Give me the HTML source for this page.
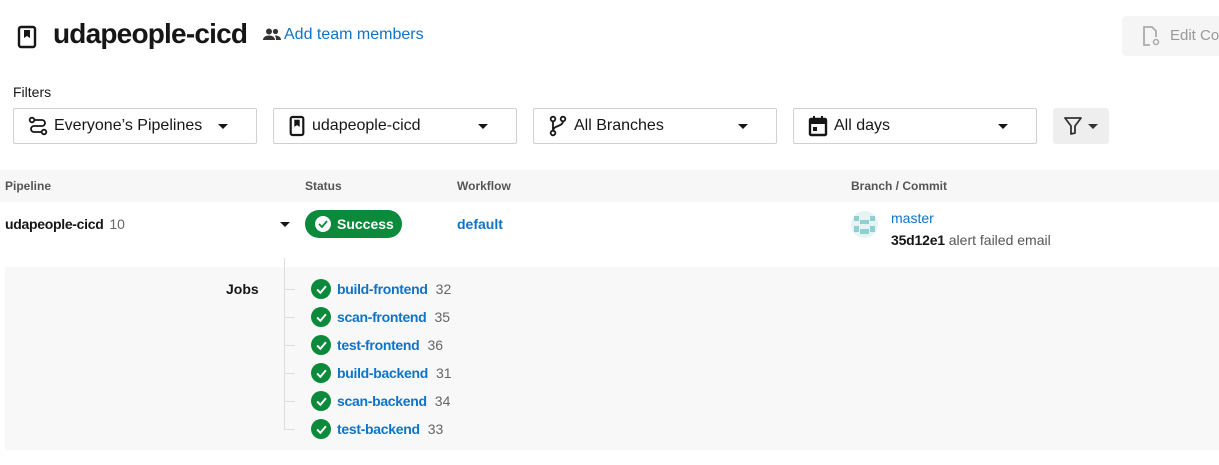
<!DOCTYPE html>
<html><head><meta charset="utf-8"><style>
*{margin:0;padding:0;box-sizing:border-box}
body{width:1219px;height:465px;background:#fff;font-family:"Liberation Sans",sans-serif;color:#161616;position:relative;overflow:hidden}
.a{position:absolute;white-space:nowrap}
.sel{position:absolute;top:108px;height:36px;border:1px solid #d0d0d0;border-radius:2px;font-size:16px;display:flex;align-items:center;padding-left:14px}
.sel svg{margin-right:6px}
.caret{position:absolute;right:28px;top:15px;width:0;height:0;border-left:5px solid transparent;border-right:5px solid transparent;border-top:5px solid #161616}
.blue{color:#0f73c8}
.hd{font-size:12px;font-weight:bold;color:#555}
.job{position:absolute;left:311px;height:20px;display:flex;align-items:center;font-size:14px;white-space:nowrap}
.job .c{width:20px;height:20px;border-radius:50%;background:#0b8a3b;margin-right:6px;display:flex;align-items:center;justify-content:center}
.job b{color:#0f73c8;margin-right:8px;letter-spacing:-0.3px}
.job span{color:#666}
.tick{position:absolute;left:285px;width:10px;height:1px;background:#ddd}
</style></head><body>
<svg class="a" style="left:17px;top:25px" width="20" height="24" viewBox="0 0 20 24"><rect x="2" y="2" width="16" height="20" rx="2" fill="none" stroke="#161616" stroke-width="2.4"/><path d="M7 5h6v8l-3-2-3 2z" fill="#161616"/></svg>
<div class="a" style="left:53px;top:18px;font-size:28px;font-weight:bold;letter-spacing:-0.8px">udapeople-cicd</div>
<svg class="a" style="left:263px;top:28px" width="18" height="13" viewBox="0 0 18 13"><circle cx="6" cy="3.5" r="3" fill="#333"/><circle cx="12.5" cy="3.5" r="2.6" fill="#333"/><path d="M0 12c0-3 3-4.5 6-4.5s6 1.5 6 4.5z M12 7.5c3 0 6 1.3 6 4.5h-5c0-2-0.5-3.3-1-4.5z" fill="#333"/></svg>
<div class="a blue" style="left:284px;top:26px;font-size:16px">Add team members</div>
<div class="a" style="left:1122px;top:16px;width:110px;height:40px;background:#f5f5f5;border-radius:4px"></div>
<svg class="a" style="left:1141px;top:25px" width="20" height="22" viewBox="0 0 20 22"><path d="M9 20H3V2h8l4 4v6" fill="none" stroke="#aaa" stroke-width="1.8"/><circle cx="15" cy="17" r="2.5" fill="none" stroke="#aaa" stroke-width="1.5"/></svg>
<div class="a" style="left:1170px;top:27px;font-size:15px;color:#999">Edit Config</div>
<div class="a" style="left:13px;top:84px;font-size:14px">Filters</div>
<div class="sel" style="left:13px;width:244px"><svg width="20" height="20" viewBox="0 0 20 20" fill="none" stroke="#161616" stroke-width="1.8"><circle cx="4" cy="4" r="2.3"/><path d="M7 4h7a3 3 0 010 6H6a3 3 0 000 6h7"/><circle cx="16" cy="16" r="2.3"/></svg>Everyone’s Pipelines<div class="caret"></div></div>
<div class="sel" style="left:273px;width:244px"><svg width="18" height="22" viewBox="0 0 20 24"><rect x="3" y="2" width="14" height="20" rx="2" fill="none" stroke="#161616" stroke-width="2.4"/><path d="M7 5h6v8l-3-2-3 2z" fill="#161616"/></svg>udapeople-cicd<div class="caret"></div></div>
<div class="sel" style="left:533px;width:244px"><svg width="20" height="22" viewBox="0 0 20 22" fill="none" stroke="#161616" stroke-width="1.8"><circle cx="5" cy="4" r="2.3"/><circle cx="5" cy="18" r="2.3"/><circle cx="15" cy="4" r="2.3"/><path d="M5 6v10M15 6c0 6-10 4-10 10"/></svg>All Branches<div class="caret"></div></div>
<div class="sel" style="left:793px;width:244px"><svg width="20" height="22" viewBox="0 0 20 22"><rect x="2" y="4" width="16" height="16" rx="1" fill="none" stroke="#161616" stroke-width="2.4"/><rect x="2" y="4" width="16" height="5" fill="#161616"/><rect x="5" y="1" width="2" height="4" fill="#161616"/><rect x="13" y="1" width="2" height="4" fill="#161616"/><rect x="5" y="12" width="4" height="4" fill="#161616"/></svg>All days<div class="caret"></div></div>
<div class="a" style="left:1053px;top:108px;width:56px;height:36px;background:#eee;border-radius:3px"></div>
<svg class="a" style="left:1063px;top:116px" width="20" height="20" viewBox="0 0 20 20"><path d="M2 2h16l-6 8v7l-4 1v-8z" fill="none" stroke="#333" stroke-width="1.8" stroke-linejoin="round"/></svg>
<div class="a" style="left:1088px;top:124px;border-left:5px solid transparent;border-right:5px solid transparent;border-top:5px solid #333"></div>
<div class="a" style="left:0;top:170px;width:1219px;height:32px;background:#f7f7f7"></div>
<div class="a hd" style="left:5px;top:179px">Pipeline</div>
<div class="a hd" style="left:305px;top:179px">Status</div>
<div class="a hd" style="left:457px;top:179px">Workflow</div>
<div class="a hd" style="left:851px;top:179px">Branch / Commit</div>
<div class="a" style="left:5px;top:216px;font-size:14px"><b style="letter-spacing:-0.3px">udapeople-cicd</b> <span style="color:#666;margin-left:2px">10</span></div>
<div class="a" style="left:280px;top:222px;border-left:5px solid transparent;border-right:5px solid transparent;border-top:5px solid #161616"></div>
<div class="a" style="left:305px;top:210px;width:97px;height:28px;background:#0b8a3b;border-radius:14px;color:#fff;font-size:14px;font-weight:bold;display:flex;align-items:center;padding-left:10px"><div style="width:16px;height:16px;border-radius:50%;background:#fff;margin-right:6px;display:flex;align-items:center;justify-content:center"><svg width="10" height="8" viewBox="0 0 10 8"><path d="M1 4l3 3 5-6" fill="none" stroke="#0b8a3b" stroke-width="1.8"/></svg></div>Success</div>
<div class="a blue" style="left:457px;top:216px;font-size:14px;font-weight:bold">default</div>
<svg class="a" style="left:851px;top:211px" width="27" height="27" viewBox="0 0 27 27"><circle cx="13.5" cy="13.5" r="13.5" fill="#e5f3f3"/><g fill="#8ecfd2"><rect x="3" y="5" width="5" height="5"/><rect x="19" y="5" width="5" height="5"/><rect x="9" y="9" width="9" height="4"/><rect x="3" y="15" width="5" height="6"/><rect x="19" y="15" width="5" height="6"/><rect x="9" y="18" width="9" height="5"/></g></svg>
<div class="a blue" style="left:891px;top:210px;font-size:14px">master</div>
<div class="a" style="left:891px;top:232px;font-size:14px"><b style="letter-spacing:-0.2px">35d12e1</b> <span style="color:#555">alert failed email</span></div>
<div class="a" style="left:5px;top:267px;width:1214px;height:183px;background:#f8f8f8"></div>
<div class="a" style="left:284px;top:258px;width:1px;height:172px;background:#ddd"></div>
<div class="a" style="left:226px;top:281px;font-size:14px;font-weight:bold">Jobs</div>
<div class="tick" style="top:289px"></div><div class="tick" style="top:317px"></div><div class="tick" style="top:345px"></div><div class="tick" style="top:373px"></div><div class="tick" style="top:401px"></div><div class="tick" style="top:429px"></div>
<div class="job" style="top:279px"><div class="c"><svg width="11" height="9" viewBox="0 0 10 8"><path d="M1 4l3 3 5-6" fill="none" stroke="#fff" stroke-width="1.8"/></svg></div><b>build-frontend</b><span>32</span></div>
<div class="job" style="top:307px"><div class="c"><svg width="11" height="9" viewBox="0 0 10 8"><path d="M1 4l3 3 5-6" fill="none" stroke="#fff" stroke-width="1.8"/></svg></div><b>scan-frontend</b><span>35</span></div>
<div class="job" style="top:335px"><div class="c"><svg width="11" height="9" viewBox="0 0 10 8"><path d="M1 4l3 3 5-6" fill="none" stroke="#fff" stroke-width="1.8"/></svg></div><b>test-frontend</b><span>36</span></div>
<div class="job" style="top:363px"><div class="c"><svg width="11" height="9" viewBox="0 0 10 8"><path d="M1 4l3 3 5-6" fill="none" stroke="#fff" stroke-width="1.8"/></svg></div><b>build-backend</b><span>31</span></div>
<div class="job" style="top:391px"><div class="c"><svg width="11" height="9" viewBox="0 0 10 8"><path d="M1 4l3 3 5-6" fill="none" stroke="#fff" stroke-width="1.8"/></svg></div><b>scan-backend</b><span>34</span></div>
<div class="job" style="top:419px"><div class="c"><svg width="11" height="9" viewBox="0 0 10 8"><path d="M1 4l3 3 5-6" fill="none" stroke="#fff" stroke-width="1.8"/></svg></div><b>test-backend</b><span>33</span></div>
</body></html>
